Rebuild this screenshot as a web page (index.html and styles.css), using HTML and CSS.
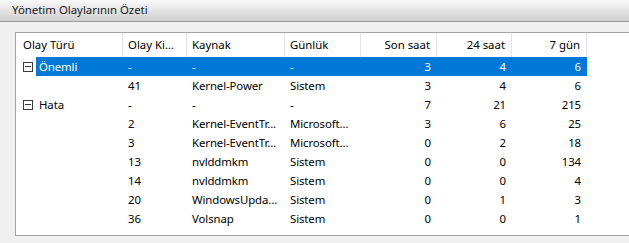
FILE: index.html
```html
<!DOCTYPE html>
<html lang="tr">
<head>
<meta charset="utf-8">
<link rel="stylesheet" href="styles.css">
</head>
<body>
<div class="titlebar">Yönetim Olaylarının Özeti</div>
<div class="panel">
  <div class="listbox">
    <div class="row header">
      <div class="hcell first">Olay Türü</div>
      <div class="hcell">Olay Ki...</div>
      <div class="hcell">Kaynak</div>
      <div class="hcell">Günlük</div>
      <div class="hcell num">Son saat</div>
      <div class="hcell num">24 saat</div>
      <div class="hcell num">7 gün</div>
    </div>
    <div class="row group selected">
      <div class="exp"><span class="box"></span></div>
      <div class="cell label">Önemli</div>
      <div class="cell">-</div>
      <div class="cell">-</div>
      <div class="cell">-</div>
      <div class="cell num">3</div>
      <div class="cell num">4</div>
      <div class="cell num">6</div>
    </div>
    <div class="row">
      <div class="exp"></div>
      <div class="cell label"></div>
      <div class="cell">41</div>
      <div class="cell">Kernel-Power</div>
      <div class="cell">Sistem</div>
      <div class="cell num">3</div>
      <div class="cell num">4</div>
      <div class="cell num">6</div>
    </div>
    <div class="row group">
      <div class="exp"><span class="box"></span></div>
      <div class="cell label">Hata</div>
      <div class="cell">-</div>
      <div class="cell">-</div>
      <div class="cell">-</div>
      <div class="cell num">7</div>
      <div class="cell num">21</div>
      <div class="cell num">215</div>
    </div>
    <div class="row">
      <div class="exp"></div>
      <div class="cell label"></div>
      <div class="cell">2</div>
      <div class="cell">Kernel-EventTr...</div>
      <div class="cell">Microsoft...</div>
      <div class="cell num">3</div>
      <div class="cell num">6</div>
      <div class="cell num">25</div>
    </div>
    <div class="row">
      <div class="exp"></div>
      <div class="cell label"></div>
      <div class="cell">3</div>
      <div class="cell">Kernel-EventTr...</div>
      <div class="cell">Microsoft...</div>
      <div class="cell num">0</div>
      <div class="cell num">2</div>
      <div class="cell num">18</div>
    </div>
    <div class="row">
      <div class="exp"></div>
      <div class="cell label"></div>
      <div class="cell">13</div>
      <div class="cell">nvlddmkm</div>
      <div class="cell">Sistem</div>
      <div class="cell num">0</div>
      <div class="cell num">0</div>
      <div class="cell num">134</div>
    </div>
    <div class="row">
      <div class="exp"></div>
      <div class="cell label"></div>
      <div class="cell">14</div>
      <div class="cell">nvlddmkm</div>
      <div class="cell">Sistem</div>
      <div class="cell num">0</div>
      <div class="cell num">0</div>
      <div class="cell num">4</div>
    </div>
    <div class="row">
      <div class="exp"></div>
      <div class="cell label"></div>
      <div class="cell">20</div>
      <div class="cell">WindowsUpda...</div>
      <div class="cell">Sistem</div>
      <div class="cell num">0</div>
      <div class="cell num">1</div>
      <div class="cell num">3</div>
    </div>
    <div class="row">
      <div class="exp"></div>
      <div class="cell label"></div>
      <div class="cell">36</div>
      <div class="cell">Volsnap</div>
      <div class="cell">Sistem</div>
      <div class="cell num">0</div>
      <div class="cell num">0</div>
      <div class="cell num">1</div>
    </div>
  </div>
</div>
</body>
</html>
```

FILE: styles.css
```css
html, body {
  margin: 0;
  padding: 0;
}
body {
  background: #f0f0f0;
  font-family: "Segoe UI", "Noto Sans", "Open Sans", sans-serif;
  font-size: 11.4px;
  color: #000;
  width: 629px;
  height: 243px;
  overflow: hidden;
}
.titlebar {
  height: 22px;
  line-height: 20px;
  padding-left: 12px;
  background: linear-gradient(#f9f9f9, #cfcfcf);
  border-bottom: 1px solid #9c9c9c;
  color: #1a1a1a;
  box-sizing: border-box;
}
.panel {
  padding: 10px 0 0 15px;
}
.listbox {
  width: 640px;
  height: 204px;
  box-sizing: border-box;
  background: #fff;
  border: 1px solid #a3a3a3;
}
.row {
  display: grid;
  grid-template-columns: 20px 87px 64px 98px 76px 76px 75px 75px;
  height: 19px;
  line-height: 19px;
}
.row.header {
  grid-template-columns: 107px 64px 98px 76px 76px 75px 75px;
  height: 24px;
  line-height: 24px;
}
.hcell {
  border-right: 1px solid #e5e5e5;
  padding-left: 5px;
  white-space: nowrap;
  overflow: hidden;
}
.hcell.first {
  padding-left: 7px;
}
.hcell.num {
  text-align: right;
  padding-left: 0;
  padding-right: 6px;
}
.cell {
  padding-left: 5px;
  white-space: nowrap;
  overflow: visible;
  letter-spacing: -0.1px;
}
.cell.label {
  padding-left: 3px;
}
.cell.num {
  text-align: right;
  padding-left: 0;
  padding-right: 6px;
}
.selected .cell {
  background: #0078d7;
  color: #fff;
}
.exp {
  display: flex;
  align-items: center;
  padding-left: 7px;
}
.box {
  width: 10px;
  height: 10px;
  border: 1px solid #3c3c3c;
  position: relative;
  box-sizing: border-box;
  margin-top: 1px;
}
.box::after {
  content: "";
  position: absolute;
  left: 1px;
  right: 1px;
  top: 3px;
  height: 1px;
  background: #3c3c3c;
}
```
